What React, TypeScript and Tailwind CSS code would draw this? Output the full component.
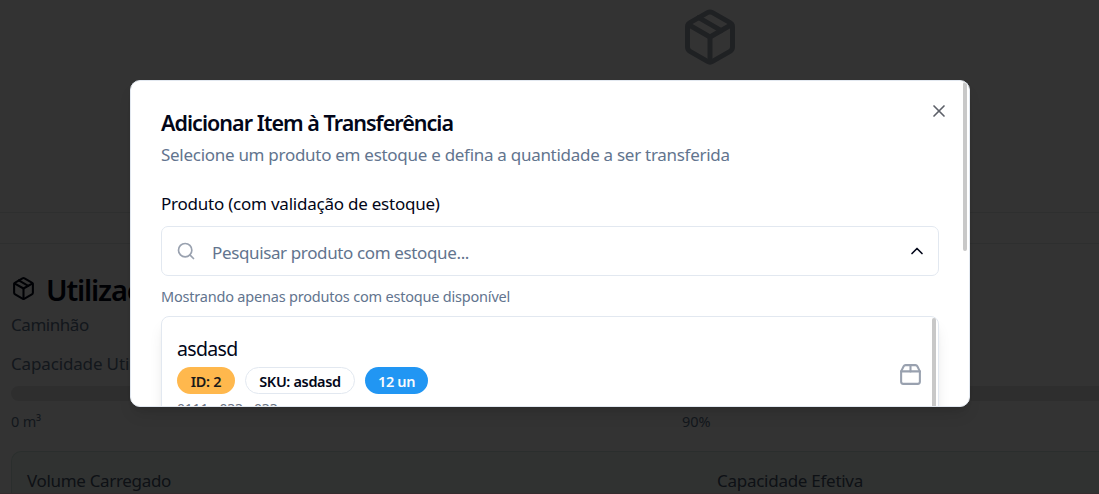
import { ChevronUp, Search, X } from "lucide-react";

function PackageBox({ className }: { className: string }) {
  return (
    <svg viewBox="0 0 24 24" fill="none" stroke="currentColor" strokeWidth="2" strokeLinecap="round" strokeLinejoin="round" className={className}>
      <path d="M11 21.73a2 2 0 0 0 2 0l7-4A2 2 0 0 0 21 16V8a2 2 0 0 0-1-1.73l-7-4a2 2 0 0 0-2 0l-7 4A2 2 0 0 0 3 8v8a2 2 0 0 0 1 1.73z" />
      <path d="M12 22V12" />
      <path d="m3.3 7 8.7 5 8.7-5" />
      <path d="m7.5 4.27 9 5.15" />
    </svg>
  );
}

function CardboardBox({ className }: { className: string }) {
  return (
    <svg viewBox="0 0 24 24" fill="none" stroke="currentColor" strokeWidth="2" strokeLinecap="round" strokeLinejoin="round" className={className}>
      <path d="M3 9h18v10a2 2 0 0 1-2 2H5a2 2 0 0 1-2-2V9Z" />
      <path d="m3 9 2.45-4.9A2 2 0 0 1 7.24 3h9.52a2 2 0 0 1 1.8 1.1L21 9" />
      <path d="M12 3v6" />
    </svg>
  );
}

function Page() {
  return (
    <div className="flex h-[494px] flex-col bg-white text-[17px] text-slate-500">
      <div className="flex h-[213px] shrink-0 justify-center border-b border-[#e4ebea] pl-[321px] pt-[7px]">
        <PackageBox className="size-[60px] text-[#9ca3af]" />
      </div>
      <div className="h-[31px] shrink-0 border-b border-[#e6e8ea] bg-[#fcfdfd]" />
      <div className="flex flex-1 flex-col pl-[11px] pt-[26px]">
        <div className="flex h-[40px] items-center gap-[10px] text-slate-950">
          <PackageBox className="mb-[4px] size-[25px]" />
          <h2 className="text-[29px] font-semibold leading-[40px] tracking-[-1.2px]">Utilização</h2>
        </div>
        <p className="mt-[2px] h-[25px] leading-[25px] tracking-[-0.45px]">Caminhão</p>
        <p className="mt-[14px] h-[25px] leading-[25px] tracking-[-0.15px]">Capacidade Utilizada</p>
        <div className="mt-[10px] h-[15px] shrink-0 rounded-l-full bg-[#e4e4e5]" />
        <div className="mt-[10px] flex h-[20px] text-[14.5px] leading-[20px]">
          <span className="w-[671px] tracking-[-0.2px]">0 m³</span>
          <span className="tracking-[-0.1px]">90%</span>
        </div>
        <div className="mt-[20px] flex h-[60px] rounded-tl-[10px] border-l border-t border-[#d0e6de] bg-[#f0f9f5] pl-[15px] pt-[16px] leading-[25px] text-slate-600">
          <span className="w-[690px] tracking-[-0.33px]">Volume Carregado</span>
          <span className="tracking-[-0.27px]">Capacidade Efetiva</span>
        </div>
      </div>
    </div>
  );
}

function ProductDialog() {
  return (
    <div className="relative h-[327px] w-[840px] overflow-hidden rounded-[10px] border border-slate-200 bg-white px-[30px] pt-[28px] shadow-lg">
      <h1 className="h-[28px] text-[21.5px] font-semibold leading-[28px] tracking-[-0.97px] text-slate-950">Adicionar Item à Transferência</h1>
      <p className="mt-[5px] h-[25px] text-[17px] leading-[25px] tracking-[-0.285px] text-slate-500">Selecione um produto em estoque e defina a quantidade a ser transferida</p>
      <p className="mt-[24px] h-[25px] text-[17px] leading-[25px] tracking-[-0.23px] text-slate-950">Produto (com validação de estoque)</p>
      <div className="mt-[10px] flex h-[50px] items-center rounded-[7px] border border-slate-200 pl-[14px] pr-[11px]">
        <Search className="size-[20px] text-gray-400" />
        <span className="ml-[16px] flex-1 pt-[3px] text-[17px] tracking-[-0.37px] text-slate-500">Pesquisar produto com estoque...</span>
        <ChevronUp className="size-[20px] text-slate-950" />
      </div>
      <p className="mt-[10px] h-[20px] text-[14.5px] leading-[20px] tracking-[-0.2px] text-slate-500">Mostrando apenas produtos com estoque disponível</p>
      <div className="relative mt-[10px] h-[200px] rounded-[8px] border border-slate-200 px-[15px] pt-[18px] shadow-lg">
        <p className="h-[28px] text-[19.5px] leading-[28px] tracking-[-0.65px] text-slate-950">asdasd</p>
        <div className="mt-[4px] flex h-[27px] gap-[10px] text-[14.5px] font-semibold tracking-[-0.35px]">
          <span className="flex w-[58px] items-center justify-center rounded-full bg-[#ffb84d] pt-[2px] text-[#1a1a1a]">ID: 2</span>
          <span className="flex w-[110px] items-center justify-center rounded-full border border-slate-200 pt-[2px] text-slate-950">SKU: asdasd</span>
          <span className="flex w-[63px] items-center justify-center rounded-full bg-[#2196f3] pt-[2px] text-slate-50">12 un</span>
        </div>
        <p className="mt-[5px] text-[14px] leading-[20px] tracking-[-0.2px] text-gray-500">0111 - 033 - 033</p>
        <CardboardBox className="absolute right-[15px] top-[45px] size-[25px] text-gray-400" />
        <div className="absolute right-[2px] top-px h-[160px] w-[4px] rounded-full bg-[#c8c8c8]" />
      </div>
      <X className="absolute right-[20px] top-[20px] size-[20px] text-[#5d6069]" />
      <div className="absolute right-[2px] top-px h-[169px] w-[4px] rounded-full bg-[#c8c8c8]" />
    </div>
  );
}

export default function App() {
  return (
    <div className="relative h-[494px] w-[1099px] overflow-hidden font-['Noto_Sans',sans-serif]">
      <Page />
      <div className="absolute inset-0 flex justify-center border-b border-[#332b2d] bg-black/80 pl-px pt-[80px]">
        <ProductDialog />
      </div>
    </div>
  );
}
